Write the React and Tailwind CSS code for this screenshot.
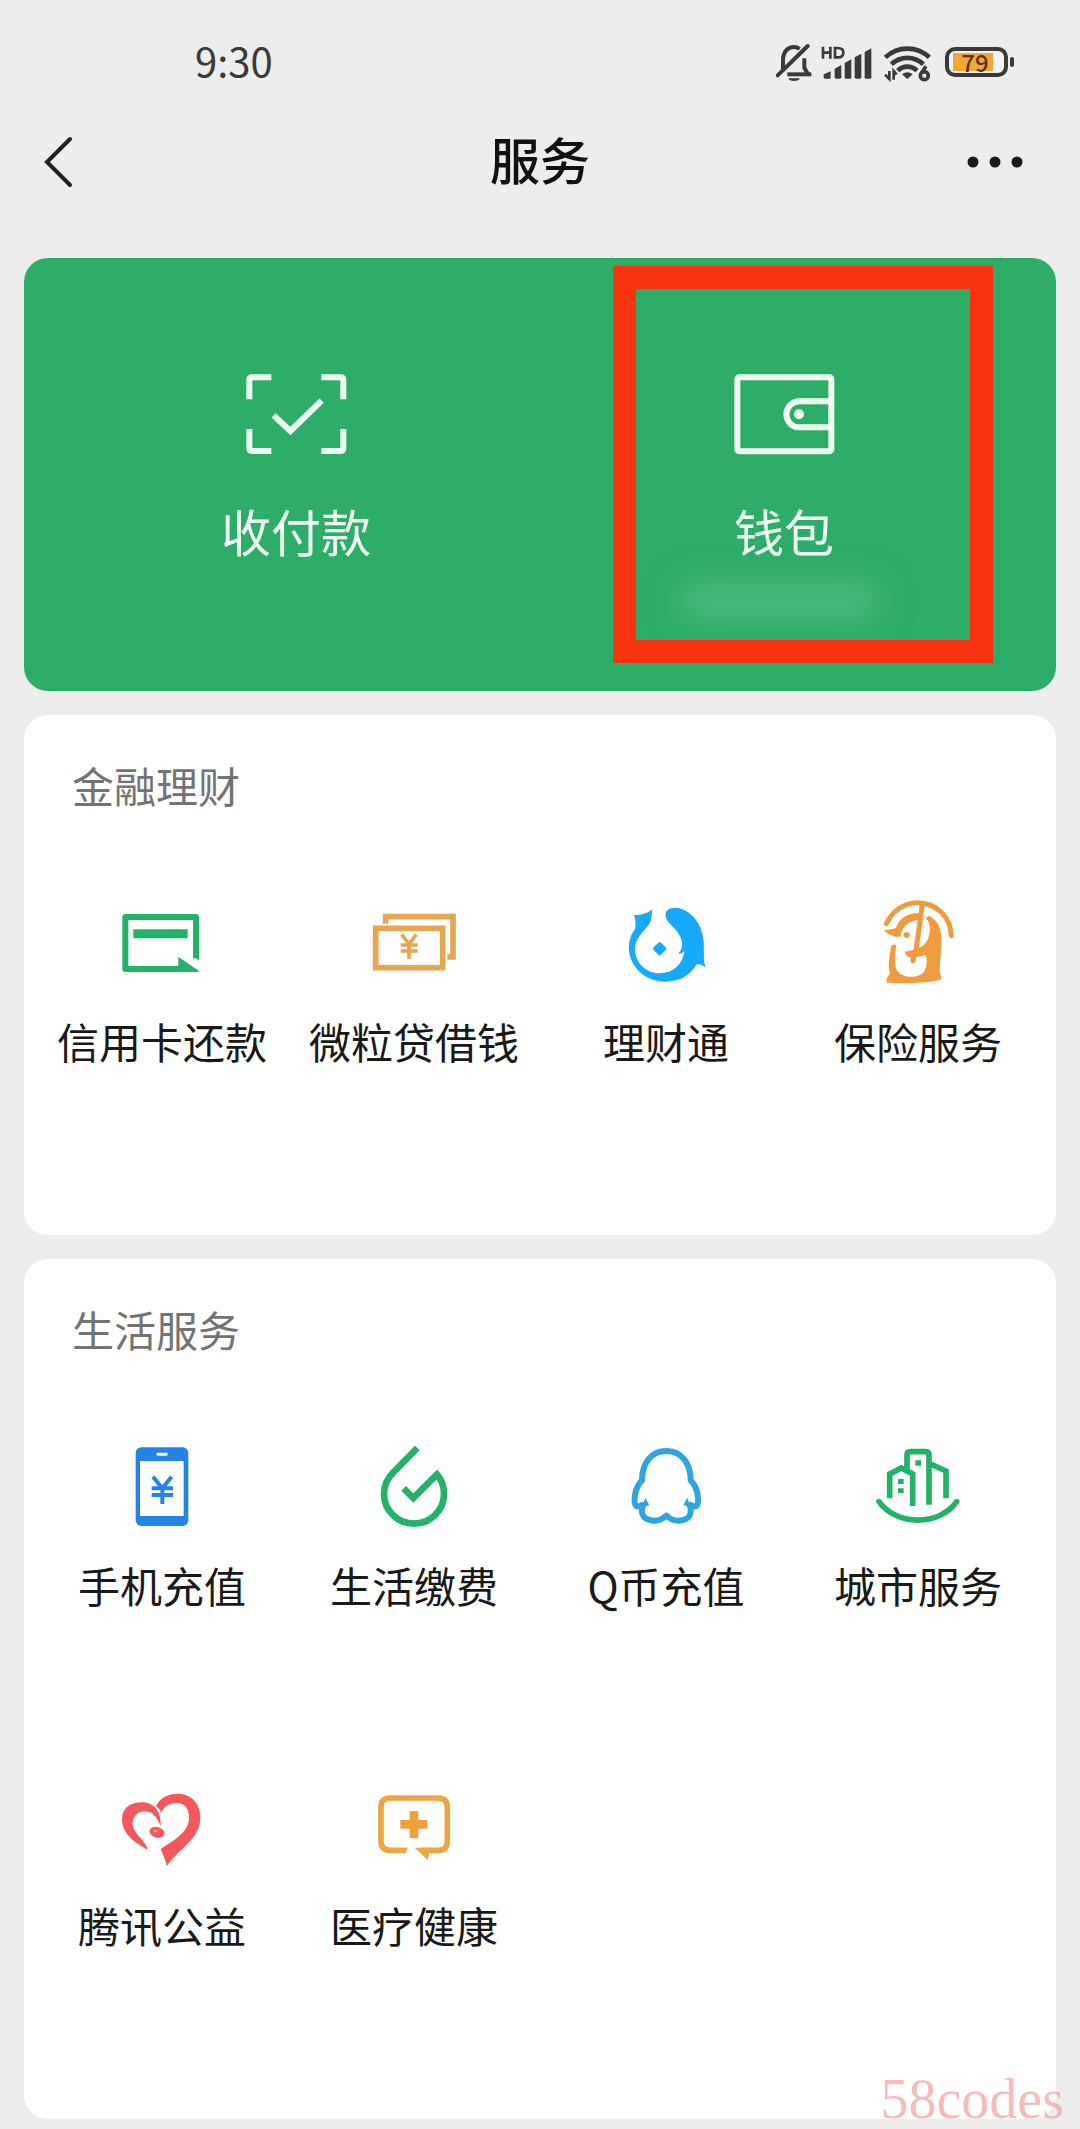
import React from "react";

function MutedBellIcon() {
  return (
    <svg className="h-[42px] w-[36px]" viewBox="0 0 108 126" fill="none" stroke="#3a3a3a" strokeWidth="12" aria-hidden="true">
      <path d="M21 84V58C21 32 36 18 53 18C60 18 66 20 71 24" />
      <path d="M85 52V80L96 100" />
      <path d="M34 100H106" />
      <path d="M5 103L95 15" strokeLinecap="round" />
      <path d="M37 112H72Q68 120 54 120T37 112Z" fill="#3a3a3a" stroke="none" />
    </svg>
  );
}

function SignalIcon() {
  return (
    <svg className="h-[42px] w-[51px]" viewBox="0 0 153 126" aria-hidden="true">
      <g fill="none" stroke="#3a3a3a" strokeWidth="8">
        <path d="M6 17V53M28 17V53M6 35H28" />
        <path d="M42 21H50C61 21 67 27 67 35S61 49 50 49H42Z" />
      </g>
      <g fill="#3a3a3a">
        <path d="M8 100L29 91V109Q29 113 25 113H12Q8 113 8 109Z" />
        <path d="M41 83L61 72V109Q61 113 57 113H45Q41 113 41 109Z" />
        <path d="M71 66L91 55V109Q91 113 87 113H75Q71 113 71 109Z" />
        <path d="M101 49L121 38V109Q121 113 117 113H105Q101 113 101 109Z" />
        <path d="M131 33L151 22V109Q151 113 147 113H135Q131 113 131 109Z" />
      </g>
    </svg>
  );
}

function WifiIcon() {
  return (
    <svg className="h-[42px] w-[48px]" viewBox="0 0 144 126" fill="none" stroke="#3a3a3a" strokeWidth="14" aria-hidden="true">
      <path d="M4 49C42 14 98 14 136 49" />
      <path d="M22 70C50 44 90 44 118 70" />
      <path d="M41 89C58 73 82 73 99 89" />
      <path d="M54 100Q70 88 86 100L70 114Z" fill="#3a3a3a" stroke="none" />
      <circle cx="121" cy="104" r="12" strokeWidth="11" />
      <path d="M112 97L126 76" strokeWidth="11" />
      <path d="M16 90V114L3 101M29 116V90L38 101" strokeWidth="8" />
    </svg>
  );
}

function Battery() {
  return (
    <div className="flex items-center gap-[2px]">
      <div className="flex h-[30px] w-[63px] items-center rounded-[10px] border-4 border-[#3a3a3a] bg-[#f3f3f5] px-1">
        <div className="flex h-[18px] w-[40px] items-center justify-center bg-[#f2a837] pl-1 font-['Noto_Sans_CJK_SC',sans-serif] text-[24px] leading-none font-medium text-[#5a3208]">
          79
        </div>
      </div>
      <div className="h-[10px] w-1 rounded-sm bg-[#3a3a3a]" />
    </div>
  );
}

function ScanPayIcon() {
  return (
    <svg className="h-[81px] w-[101px]" viewBox="0 0 303 243" fill="none" stroke="#f0fff5" strokeWidth="18" aria-hidden="true">
      <path d="M10 76V18Q10 10 18 10H76" />
      <path d="M226 10H284Q292 10 292 18V76" />
      <path d="M10 165V223Q10 231 18 231H76" />
      <path d="M226 231H284Q292 231 292 223V165" />
      <path d="M83 124L133 171L227 80" />
    </svg>
  );
}

function WalletIcon() {
  return (
    <svg className="h-[81px] w-[101px]" viewBox="0 0 303 243" fill="none" stroke="#f0fff5" strokeWidth="18" aria-hidden="true">
      <rect x="10" y="10" width="282" height="222" rx="6" />
      <path d="M292 82H196A39 39 0 0 0 196 160H292" />
      <circle cx="195" cy="121" r="15" fill="#f0fff5" stroke="none" />
    </svg>
  );
}

function TileIcon({ children }) {
  return (
    <svg className="size-24" viewBox="0 0 288 288" fill="none" aria-hidden="true">
      {children}
    </svg>
  );
}

function CreditCardIcon() {
  return (
    <TileIcon>
      <path d="M246 190V66H34V222H230" stroke="#22b268" strokeWidth="18" strokeLinejoin="round" />
      <path d="M237 180L255 197V180Z" fill="#22b268" />
      <path d="M58 103H221V130H58Z" fill="#22b268" />
      <path d="M193 185L255 228L252 231H193Z" fill="#22b268" />
    </TileIcon>
  );
}

function LoanIcon() {
  return (
    <TileIcon>
      <g stroke="#e7a651" strokeWidth="17">
        <path d="M59 86V65H261V186H244" />
        <rect x="29" y="100" width="201" height="118" />
        <path d="M107 118L129 148L151 118M129 146V192M104 150H155M104 168H155" strokeWidth="11" />
      </g>
    </TileIcon>
  );
}

function DolphinIcon() {
  return (
    <TileIcon>
      <g transform="translate(-114 -48)" fill="#18aafa">
        <path d="M217 90C205 102 185 108 162 108C167 122 168 136 165 150C151 170 145 190 147 215C152 266 198 308 256 308C298 308 328 292 350 256C361 254 370 260 377 266C369 244 373 226 371 188C368 130 325 86 285 86C262 86 253 99 258 116C264 138 299 150 306 190C308 204 304 215 294 224C302 225 308 221 314 217C307 258 276 283 240 283C195 283 163 247 165 207C168 166 206 150 213 122Z" />
        <path d="M235 191Q239 187 243 191L257 205Q261 209 257 213L243 227Q239 231 235 227L221 213Q217 209 221 205Z" />
      </g>
    </TileIcon>
  );
}

function InsuranceIcon() {
  return (
    <TileIcon>
      <g transform="translate(-870 -48)">
        <path d="M919 134C938 95 973 71 1012 71C1070 71 1112 115 1114 170" stroke="#f09c3e" strokeWidth="15" strokeLinecap="round" />
        <path d="M1027 76L1007 222" stroke="#f09c3e" strokeWidth="15" />
        <g fill="#f09c3e">
          <path d="M912 153C928 152 940 151 948 147C956 118 985 99 1020 103L1017 123C985 125 964 145 961 173C944 176 924 168 912 153Z" />
          <circle cx="980" cy="168" r="9" />
          <path d="M1045 110C1083 126 1088 165 1083 218C1080 258 1075 280 1085 294L1083 301C1050 314 980 313 921 311C917 300 923 291 930 285C923 260 928 230 934 200Q940 194 949 198C944 232 942 262 952 275C968 299 1020 299 1034 275C1042 258 1042 238 1036 228L1008 235C1010 246 1004 253 998 253C990 250 989 241 994 236C983 234 975 226 974 218C1004 212 1030 208 1043 182C1055 155 1051 132 1038 118Z" />
        </g>
      </g>
    </TileIcon>
  );
}

function PhoneIcon() {
  return (
    <TileIcon>
      <rect x="65" y="25" width="158" height="236" rx="17" fill="#2383e6" />
      <rect x="78" y="66" width="131" height="165" fill="#ffffff" />
      <rect x="127" y="41" width="34" height="9" rx="4" fill="#ffffff" />
      <path d="M117 113L145 148L173 113M145 146V195M113 148H177M113 168H177" stroke="#2383e6" strokeWidth="12" />
    </TileIcon>
  );
}

function UtilityIcon() {
  return (
    <TileIcon>
      <path d="M154 27L82 100C62 120 54 140 54 164A90 90 0 0 0 234 164C234 142 227 122 213 106L142 177L113 148" stroke="#22b268" strokeWidth="20" />
    </TileIcon>
  );
}

function PenguinIcon() {
  return (
    <TileIcon>
      <g transform="translate(-174 -60)">
        <g stroke="#2fa4e0" strokeWidth="18" strokeLinejoin="round" strokeLinecap="round">
          <path d="M246 258C230 268 222 262 224 236C226 210 234 196 246 184C246 132 274 96 319 96C364 96 392 132 392 184C404 196 412 210 414 236C416 262 408 268 392 258" />
          <path d="M248 262C242 280 248 296 266 302C284 308 304 304 319 290C334 304 354 308 372 302C390 296 396 280 390 262" />
        </g>
        <path d="M256 236L268 258L246 266ZM382 236L370 258L392 266Z" fill="#2fa4e0" />
      </g>
    </TileIcon>
  );
}

function CityIcon() {
  return (
    <TileIcon>
      <g transform="translate(-930 -60)">
        <g stroke="#22b268" strokeWidth="17">
          <path d="M957 248C1010 322 1138 322 1190 248" strokeLinecap="round" />
          <path d="M1041 156V108Q1041 98 1051 98H1097Q1107 98 1107 108V257" />
          <path d="M989 238V165L1024 147L1058 165V261" />
          <path d="M1107 133L1158 156V238" />
        </g>
        <path d="M1066 124H1083V140H1066ZM1014 180H1031V195H1014ZM1014 208H1031V223H1014Z" fill="#22b268" />
      </g>
    </TileIcon>
  );
}

function CharityIcon() {
  return (
    <TileIcon>
      <g transform="translate(-162 -30)" fill="#f4585c">
        <path d="M264 243C226 222 186 196 186 150C186 116 214 100 245 100C286 100 305 132 302 172C291 145 278 127 255 127C231 127 216 145 218 167C221 196 256 212 264 243Z" />
        <path d="M288 112C300 85 325 74 352 74C396 74 423 106 421 150C417 214 356 238 321 291C316 274 310 258 302 240C340 215 384 192 387 150C389 121 375 102 351 102C326 102 311 115 304 131C299 120 294 115 288 112Z" />
        <ellipse cx="291" cy="190" rx="23" ry="16" transform="rotate(15 291 190)" />
        <ellipse cx="286" cy="187" rx="6" ry="3" fill="#fbb4b2" />
      </g>
    </TileIcon>
  );
}

function MedicalIcon() {
  return (
    <TileIcon>
      <g transform="translate(-918 -30)">
        <path d="M1036 244H990Q963 244 963 217V114Q963 87 990 87H1135Q1162 87 1162 114V217Q1162 244 1135 244H1085" stroke="#eda545" strokeWidth="17" />
        <path d="M1034 236H1044L1036 252H1034ZM1064 236H1112L1103 273Z" fill="#eda545" />
        <path d="M1049 126H1075V153H1102V179H1075V207H1049V179H1021V153H1049Z" fill="#f0a03a" />
      </g>
    </TileIcon>
  );
}

const FINANCE = [
  { label: "信用卡还款", Icon: CreditCardIcon },
  { label: "微粒贷借钱", Icon: LoanIcon },
  { label: "理财通", Icon: DolphinIcon },
  { label: "保险服务", Icon: InsuranceIcon },
];

const LIFE = [
  { label: "手机充值", Icon: PhoneIcon },
  { label: "生活缴费", Icon: UtilityIcon },
  { label: "Q币充值", Icon: PenguinIcon },
  { label: "城市服务", Icon: CityIcon },
  { label: "腾讯公益", Icon: CharityIcon },
  { label: "医疗健康", Icon: MedicalIcon },
];

function Section({ title, items }) {
  return (
    <section className="rounded-3xl bg-white px-3 pt-10">
      <h2 className="mb-20 px-9 text-[42px] leading-[60px] text-[#737373]">{title}</h2>
      <div className="grid grid-cols-4">
        {items.map(({ label, Icon }) => (
          <button key={label} type="button" className="flex flex-col items-center pb-[164px]">
            <Icon />
            <span className="mt-5 text-[42px] leading-[60px] whitespace-nowrap text-[#191919]">{label}</span>
          </button>
        ))}
      </div>
    </section>
  );
}

export default function App() {
  return (
    <div className="relative min-h-screen bg-[#ededed] pb-[10px] font-['Noto_Sans_CJK_SC',sans-serif]">
      <div className="flex h-[92px] items-center justify-between pt-8 pr-[66px] pl-[195px]">
        <span className="pb-1 text-[40px] leading-[56px] text-[#3a3a3a]">9:30</span>
        <div className="flex items-center">
          <MutedBellIcon />
          <div className="ml-[9px] flex">
            <SignalIcon />
          </div>
          <div className="mr-[13px] ml-3 flex">
            <WifiIcon />
          </div>
          <Battery />
        </div>
      </div>

      <header className="mt-7 grid h-[84px] grid-cols-[1fr_auto_1fr] items-center px-11">
        <button type="button" aria-label="返回" className="justify-self-start">
          <svg className="h-[52px] w-[30px]" viewBox="0 0 30 52" fill="none" stroke="#222222" strokeWidth="4" strokeLinecap="round" aria-hidden="true">
            <path d="M26 3L3 26L26 49" />
          </svg>
        </button>
        <h1 className="pb-2 text-[50px] leading-[72px] font-medium text-[#111111]">服务</h1>
        <button type="button" aria-label="更多" className="justify-self-end pr-[13px]">
          <svg className="h-3 w-14" viewBox="0 0 56 12" fill="#1a1a1a" aria-hidden="true">
            <circle cx="6" cy="6" r="5.500" />
            <circle cx="28" cy="6" r="5.500" />
            <circle cx="50" cy="6" r="5.500" />
          </svg>
        </button>
      </header>

      <main className="mt-[54px] flex flex-col gap-6 px-6">
        <div className="grid grid-cols-2 rounded-3xl bg-[#2dad67] px-7">
          <button type="button" className="flex flex-col items-center pt-[116px] pb-[125px]">
            <ScanPayIcon />
            <span className="mt-[39px] text-[50px] leading-[72px] text-[#f0fff5]">收付款</span>
          </button>
          <button type="button" className="relative flex flex-col items-center pt-[116px] pb-[125px]">
            <WalletIcon />
            <span className="mt-[39px] text-[50px] leading-[72px] text-[#f0fff5]">钱包</span>
            <span className="absolute right-[148px] bottom-[72px] left-[138px] h-9 rounded-full bg-[#49ba7c] blur-lg" />
            <span className="absolute top-2 right-[35px] bottom-7 left-[73px] border-[23px] border-[#f73310]" />
          </button>
        </div>
        <Section title="金融理财" items={FINANCE} />
        <Section title="生活服务" items={LIFE} />
      </main>

      <div className="pointer-events-none absolute right-4 bottom-0.5 font-['Liberation_Serif',serif] text-[56px] leading-[56px] text-[#f2a0a0]/70">
        58codes
      </div>
    </div>
  );
}
